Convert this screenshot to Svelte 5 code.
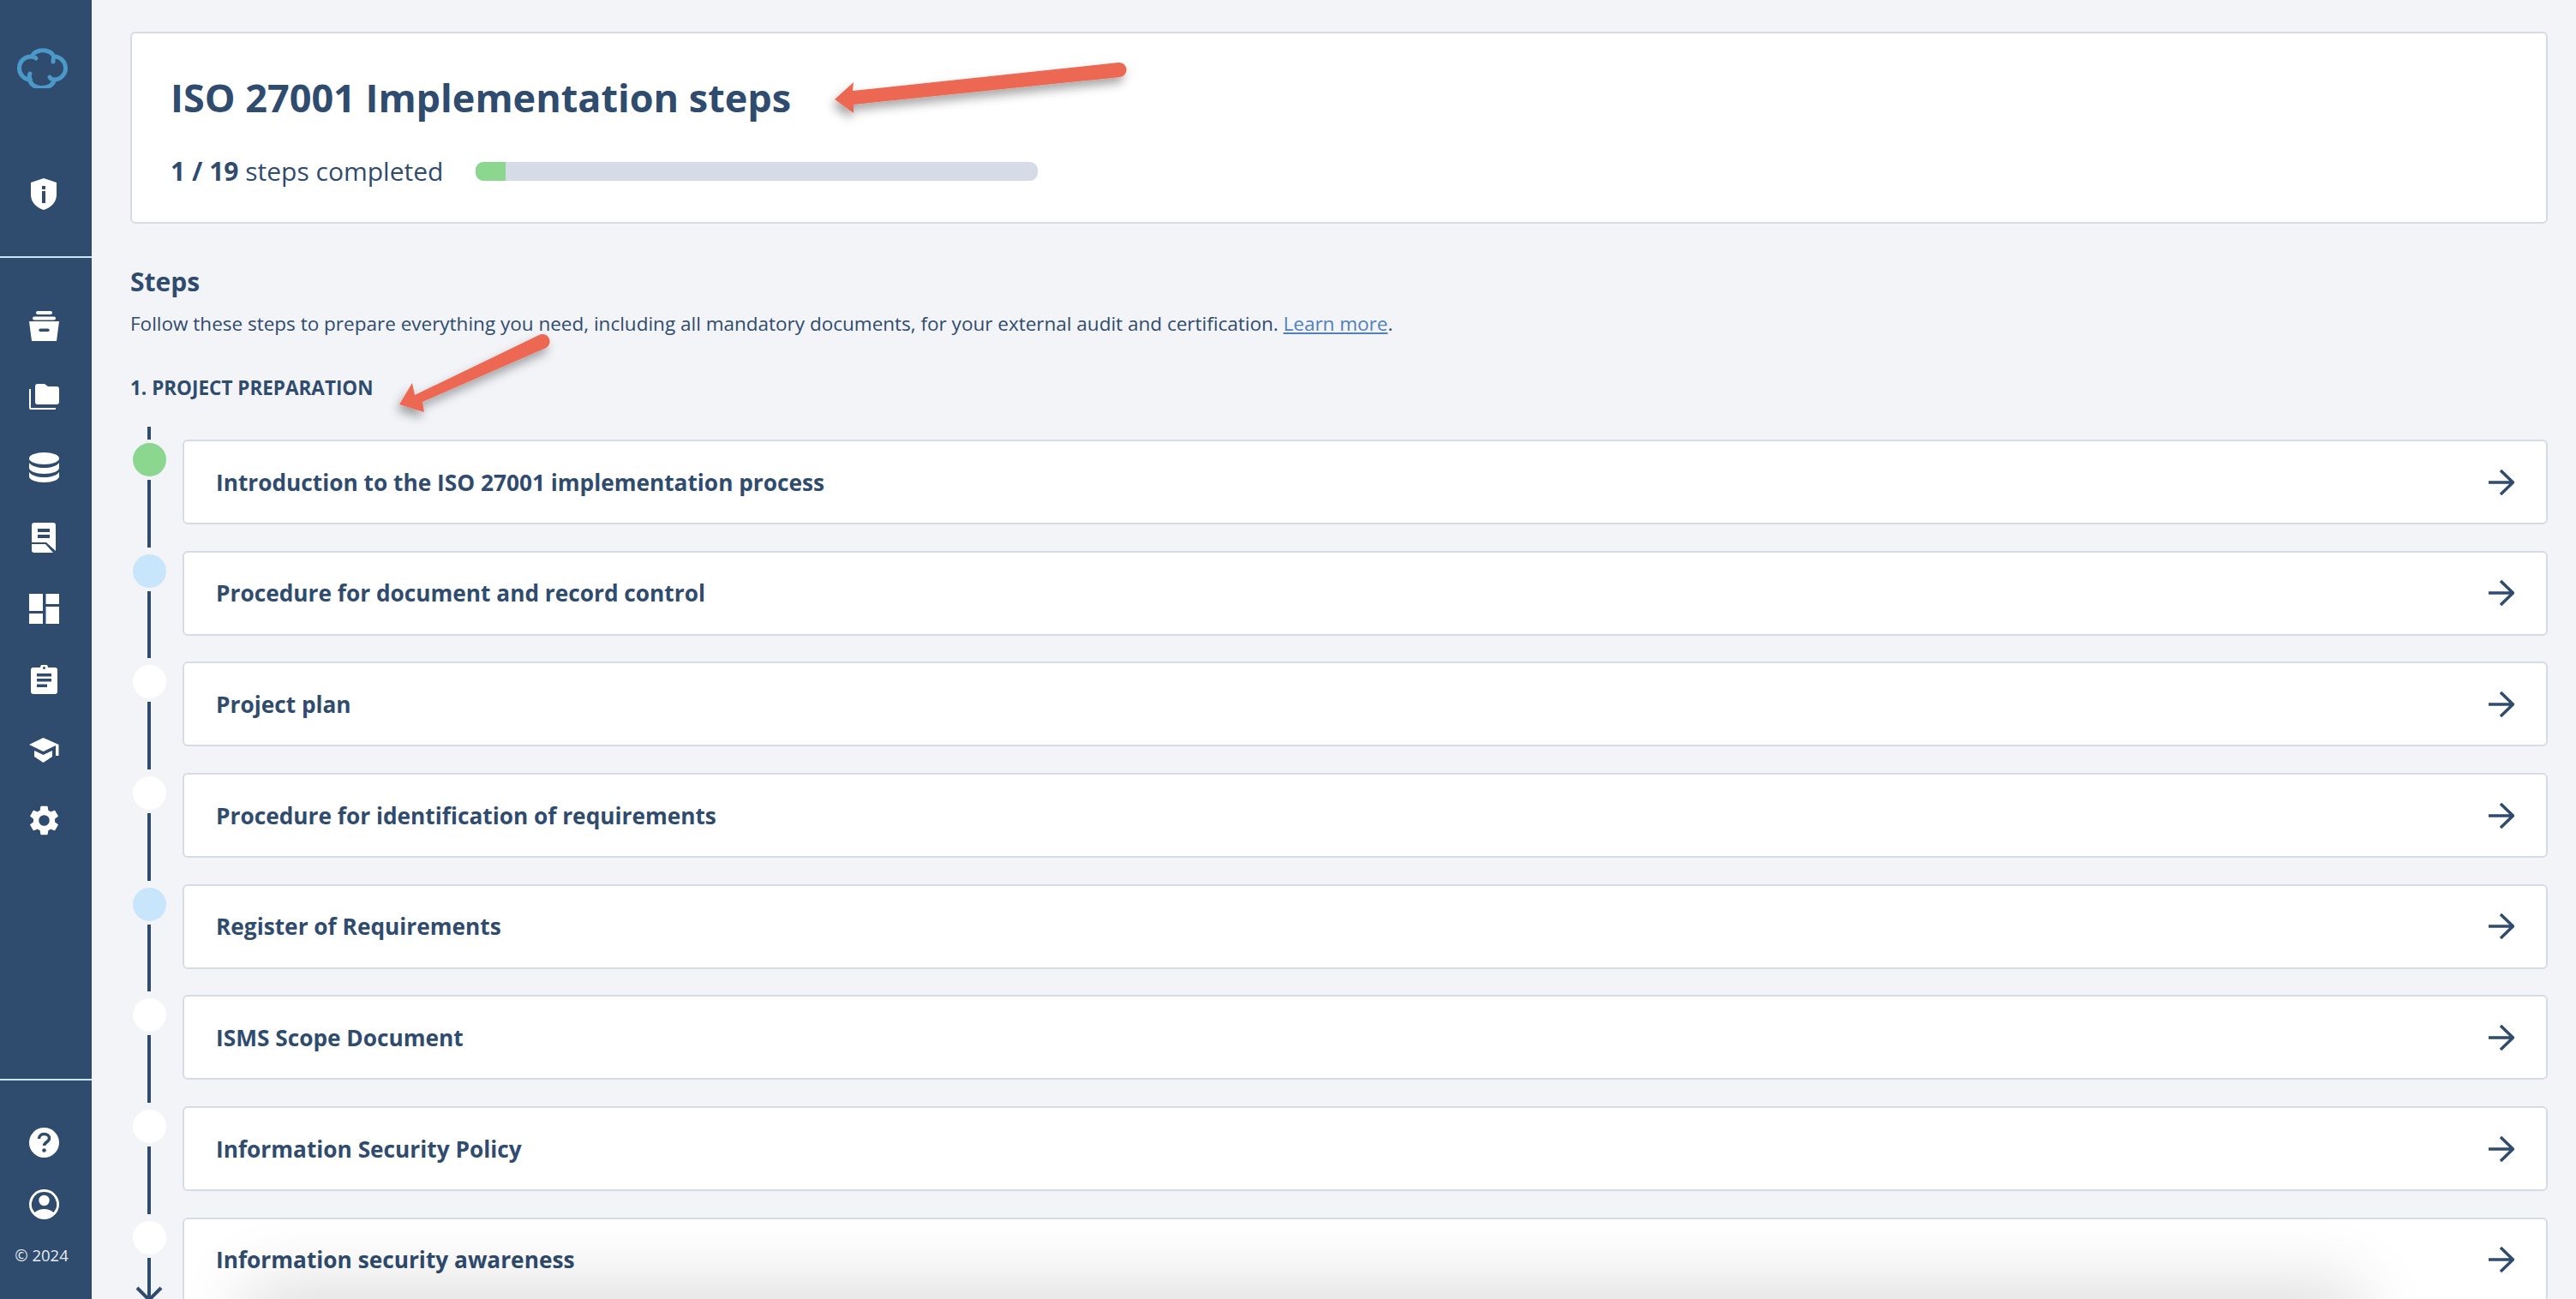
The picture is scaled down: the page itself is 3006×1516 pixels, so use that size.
<script>
  const steps = [
    { title: 'Introduction to the ISO 27001 implementation process', status: 'done' },
    { title: 'Procedure for document and record control', status: 'active' },
    { title: 'Project plan', status: 'todo' },
    { title: 'Procedure for identification of requirements', status: 'todo' },
    { title: 'Register of Requirements', status: 'active' },
    { title: 'ISMS Scope Document', status: 'todo' },
    { title: 'Information Security Policy', status: 'todo' },
    { title: 'Information security awareness', status: 'todo' }
  ];
  const completed = 1;
  const total = 19;
</script>

<div class="app">
  <aside class="sidebar">
    <div class="top">
      <svg class="logo" viewBox="0 0 62 48" fill="none" stroke="#4b99c8" stroke-width="5" stroke-linecap="round">
        <path d="M18 11A13.500 10 0 0 1 44 11 13.500 13.500 0 0 1 44 38 14 9.500 0 0 1 16 38 13.500 13.500 0 0 1 18 11z"/>
        <path d="M18 11c2 0 4 1 5 2M44 11c-1 2-1 4-1 6M16 38c-1-2-1-5 0-7M44 38c-2 0-4-1-5-3"/>
      </svg>
      <span class="nav-icon first">
        <svg width="30" height="37" viewBox="0 0 30 37">
          <path fill="#fff" fill-rule="evenodd" d="M15 0 30 5v14c0 9-6 15-15 18C6 34 0 28 0 19V5zM13 9v4h4V9zM13 15v14h4V15z"/>
        </svg>
      </span>
    </div>
    <nav class="nav">
      <span class="nav-icon">
        <svg width="35" height="35" viewBox="0 0 35 35" fill="#fff">
          <rect x="8" y="0" width="19" height="4" rx="2"/>
          <rect x="4" y="6.500" width="27" height="4" rx="2"/>
          <path fill-rule="evenodd" d="M0 12h35l-3 23H3zM13 20.500a1.500 1.500 0 0 0 0 3.500h9a1.500 1.500 0 0 0 0-3.500z"/>
        </svg>
      </span>
      <span class="nav-icon">
        <svg width="35" height="30" viewBox="0 0 35 30" fill="#fff">
          <path d="M7 3a3 3 0 0 1 3-3h8l4 3h10a3 3 0 0 1 3 3v15a3 3 0 0 1-3 3H10a3 3 0 0 1-3-3z"/>
          <path d="M0 6h2v22h29v2H2a2 2 0 0 1-2-2z"/>
        </svg>
      </span>
      <span class="nav-icon">
        <svg width="35" height="35" viewBox="0 0 35 35" fill="#fff">
          <ellipse cx="17.500" cy="7" rx="17.500" ry="7"/>
          <path d="M0 12c3 4 10 6 17.500 6S32 16 35 12v6c0 4-8 7-17.500 7S0 22 0 18z"/>
          <path d="M0 23c3 4 10 6 17.500 6S32 27 35 23v5c0 4-8 7-17.500 7S0 32 0 28z"/>
        </svg>
      </span>
      <span class="nav-icon">
        <svg width="28" height="35" viewBox="0 0 28 35" fill="#fff">
          <path fill-rule="evenodd" d="M3 0h22a3 3 0 0 1 3 3v30L17 23H0V3a3 3 0 0 1 3-3zM7 7v4h14V7zM7 14v4h14v-4z"/>
          <path d="M0 25h16l9 10H3a3 3 0 0 1-3-3z"/>
        </svg>
      </span>
      <span class="nav-icon">
        <svg width="35" height="35" viewBox="0 0 35 35" fill="#fff">
          <rect x="0" y="0" width="16" height="20"/>
          <rect x="0" y="23" width="16" height="12"/>
          <rect x="19.500" y="0" width="15.500" height="12"/>
          <rect x="19.500" y="15" width="15.500" height="20"/>
        </svg>
      </span>
      <span class="nav-icon">
        <svg width="31" height="34" viewBox="0 0 31 34" fill="#fff">
          <path fill-rule="evenodd" d="M3 3h8a4.500 4.500 0 0 1 9 0h8a3 3 0 0 1 3 3v25a3 3 0 0 1-3 3H3a3 3 0 0 1-3-3V6a3 3 0 0 1 3-3zM15.500 2a1.500 1.500 0 1 0 0 3 1.500 1.500 0 0 0 0-3zM7 10v3.500h17V10zM7 16v3.500h17V16zM7 22.500V26h12v-3.500z"/>
        </svg>
      </span>
      <span class="nav-icon">
        <svg width="35" height="29" viewBox="0 0 35 29" fill="#fff">
          <path d="M16.500 0 0 8l16.500 8L31 9v12h3.500V8z"/>
          <path d="M6 15v7l10.500 7L27 22v-7l-10.500 5z"/>
        </svg>
      </span>
      <span class="nav-icon">
        <svg width="35" height="35" viewBox="2.500 2 19 20" fill="#fff">
          <path fill-rule="evenodd" d="M19.140 12.940c.04-.3.06-.61.06-.94s-.02-.64-.07-.94l2.030-1.580a.49.490 0 0 0 .12-.61l-1.920-3.320a.49.490 0 0 0-.59-.22l-2.390.96a7 7 0 0 0-1.620-.94l-.36-2.540a.48.480 0 0 0-.48-.41h-3.840a.48.480 0 0 0-.47.41l-.36 2.540a7.300 7.300 0 0 0-1.620.94l-2.390-.96a.49.490 0 0 0-.59.22L2.740 8.870a.48.480 0 0 0 .12.61l2.030 1.580c-.05.3-.09.63-.09.94s.02.64.07.94l-2.030 1.580a.49.490 0 0 0-.12.61l1.920 3.320c.12.22.37.29.59.22l2.390-.96c.5.380 1.030.7 1.620.94l.36 2.540c.05.24.24.41.48.41h3.840c.24 0 .44-.17.47-.41l.36-2.540a7 7 0 0 0 1.620-.94l2.390.96c.22.08.47 0 .59-.22l1.920-3.320a.48.480 0 0 0-.12-.61zM12 15.600a3.600 3.600 0 1 1 0-7.200 3.600 3.600 0 0 1 0 7.200z"/>
        </svg>
      </span>
    </nav>
    <div class="bottom">
      <span class="foot-icon">
        <svg width="35" height="35" viewBox="0 0 35 35">
          <circle cx="17.500" cy="17.500" r="17.500" fill="#fff"/>
          <path d="M11.500 13c0-3.500 2.500-5.500 6-5.500s6 2 6 5c0 4.500-6 4.500-6 8.500" fill="none" stroke="#2f4b6e" stroke-width="3.500"/>
          <circle cx="17.500" cy="26.500" r="2.300" fill="#2f4b6e"/>
        </svg>
      </span>
      <span class="foot-icon">
        <svg width="35" height="35" viewBox="0 0 35 35" fill="#fff">
          <path fill-rule="evenodd" d="M17.500 0a17.500 17.500 0 1 1 0 35 17.500 17.500 0 0 1 0-35zm0 3a14.500 14.500 0 0 0-11 24c3-2.500 7-4 11-4s8 1.500 11 4a14.500 14.500 0 0 0-11-24z"/>
          <circle cx="17.500" cy="13" r="6.200"/>
        </svg>
      </span>
      <span class="copy">© 2024</span>
    </div>
  </aside>

  <main class="main">
    <section class="summary">
      <h1>ISO 27001 Implementation steps</h1>
      <div class="progress-row">
        <span class="count"><b>{completed} / {total}</b> steps completed</span>
        <div class="bar"><div class="fill" style="width: {(completed / total) * 100}%"></div></div>
      </div>
    </section>

    <h2>Steps</h2>
    <p class="intro">Follow these steps to prepare everything you need, including all mandatory documents, for your external audit and certification. <a href="#learn">Learn more</a>.</p>
    <h3>1. PROJECT PREPARATION</h3>

    <div class="timeline">
      <div class="stub"></div>
      {#each steps as step, i}
        <div class="row" class:last={i === steps.length - 1}>
          <div class="marker">
            <span class="dot {step.status}"></span>
            <span class="line"></span>
            {#if i === steps.length - 1}
              <svg class="tip" width="34" height="22" viewBox="0 0 34 22" fill="none" stroke="#2f4b6e" stroke-width="4">
                <path d="M3 3 17 17 31 3"/>
              </svg>
            {/if}
          </div>
          <div class="card">
            <span class="label">{step.title}</span>
            <svg width="30" height="30" viewBox="0 0 30 30" fill="none" stroke="#2f4b6e" stroke-width="3.500">
              <path d="M0 15h28M14 1l14.500 14L14 29"/>
            </svg>
          </div>
        </div>
      {/each}
    </div>
  </main>

  <!-- annotation arrows drawn over the screenshot -->
  <svg class="arrows" width="3006" height="1516" viewBox="0 0 3006 1516">
    <defs>
      <filter id="arrow-shadow" x="-20%" y="-50%" width="140%" height="200%">
        <feDropShadow dx="-3" dy="7" stdDeviation="6" flood-color="#000" flood-opacity="0.35"/>
      </filter>
    </defs>
    <g fill="#ec6753" filter="url(#arrow-shadow)">
      <path d="M974 116 996 96 995 106 1305 73a8.500 8.500 0 0 1 2 17L996 122 996 132z"/>
      <path d="M466 472 481 447 484 461 629 391a8.500 8.500 0 0 1 8 15L493 469 495 481z"/>
    </g>
  </svg>
  <div class="fade"></div>
</div>

<style>
  :global(body) {
    margin: 0;
    background: #f2f4f8;
  }

  .app {
    position: relative;
    display: flex;
    width: 3006px;
    height: 1516px;
    overflow: hidden;
    background: #f2f4f8;
    color: #2f4b6e;
    font-family: "Open Sans", "Noto Sans", sans-serif;
  }

  .sidebar {
    width: 107px;
    flex: none;
    box-sizing: border-box;
    display: flex;
    flex-direction: column;
    background: #2f4b6e;
  }

  .top {
    height: 299px;
    flex: none;
    display: flex;
    flex-direction: column;
    align-items: center;
    border-bottom: 2px solid #c8e6fb;
    padding-right: 5px;
  }

  .logo {
    width: 62px;
    height: 48px;
    margin-top: 55px;
    margin-left: -2px;
  }

  .nav-icon {
    height: 82.5px;
    display: flex;
    align-items: center;
    justify-content: center;
  }

  .nav-icon.first {
    margin-top: 82px;
  }

  .nav {
    flex: 1;
    padding: 38px 5px 0 0;
    display: flex;
    flex-direction: column;
  }

  .bottom {
    height: 257px;
    flex: none;
    box-sizing: border-box;
    border-top: 2px solid #c8e6fb;
    padding: 36px 5px 0 0;
    display: flex;
    flex-direction: column;
    align-items: center;
  }

  .foot-icon {
    height: 72px;
    display: flex;
    align-items: center;
    justify-content: center;
  }

  .copy {
    margin-top: 11px;
    margin-left: -5px;
    font-size: 18.500px;
    color: #e6ebf2;
  }

  .main {
    flex: 1;
    padding: 37px 33px 0 45px;
    min-width: 0;
  }

  .summary {
    height: 224px;
    box-sizing: border-box;
    padding: 45px 45px;
    background: #fff;
    border: 2px solid #d5dce7;
    border-radius: 6px;
  }

  h1 {
    margin: 0;
    font-size: 45px;
    line-height: 60px;
    font-weight: 700;
  }

  .progress-row {
    margin-top: 36px;
    display: flex;
    align-items: center;
    gap: 38px;
  }

  .count {
    font-size: 30px;
    line-height: 40px;
  }

  .count b {
    font-weight: 700;
  }

  .bar {
    width: 656px;
    height: 22px;
    border-radius: 9px;
    background: #d5dce7;
    overflow: hidden;
  }

  .fill {
    height: 100%;
    background: #8cd790;
  }

  h2 {
    margin: 48px 0 0;
    font-size: 30px;
    line-height: 40px;
    font-weight: 700;
  }

  .intro {
    margin: 12px 0 0;
    font-size: 22.500px;
    line-height: 34px;
  }

  .intro a {
    color: #4f80bf;
  }

  h3 {
    margin: 43px 0 0;
    font-size: 22.500px;
    line-height: 30px;
    font-weight: 700;
  }

  .timeline {
    margin-top: 30px;
  }

  .stub {
    width: 4px;
    height: 15px;
    margin-left: 20px;
    background: #2f4b6e;
  }

  .row {
    display: flex;
    height: 129.7px;
  }

  .marker {
    width: 61px;
    flex: none;
    display: flex;
    flex-direction: column;
    align-items: flex-start;
    padding-top: 4px;
    box-sizing: border-box;
  }

  .dot {
    width: 39px;
    height: 39px;
    margin-left: 3px;
    border-radius: 50%;
    background: #fff;
    flex: none;
  }

  .dot.done {
    background: #8cd790;
  }

  .dot.active {
    background: #c8e6fb;
  }

  .line {
    flex: 1;
    width: 4px;
    margin: 4px 0 4px 20px;
    background: #2f4b6e;
  }

  .row.last .line {
    flex: none;
    height: 52px;
    margin-bottom: -20px;
  }

  .tip {
    margin-left: 5px;
    flex: none;
  }

  .card {
    flex: 1;
    height: 99px;
    box-sizing: border-box;
    display: flex;
    align-items: center;
    justify-content: space-between;
    padding: 0 37px 0 37px;
    background: #fff;
    border: 2px solid #d5dce7;
    border-radius: 6px;
  }

  .label {
    font-size: 26.250px;
    font-weight: 700;
  }

  .arrows {
    position: absolute;
    left: 0;
    top: 0;
    pointer-events: none;
  }

  .fade {
    position: absolute;
    left: 320px;
    top: 1530px;
    width: 2400px;
    height: 60px;
    box-shadow: 0 0 80px 34px rgba(0, 0, 0, 0.13);
  }
</style>
